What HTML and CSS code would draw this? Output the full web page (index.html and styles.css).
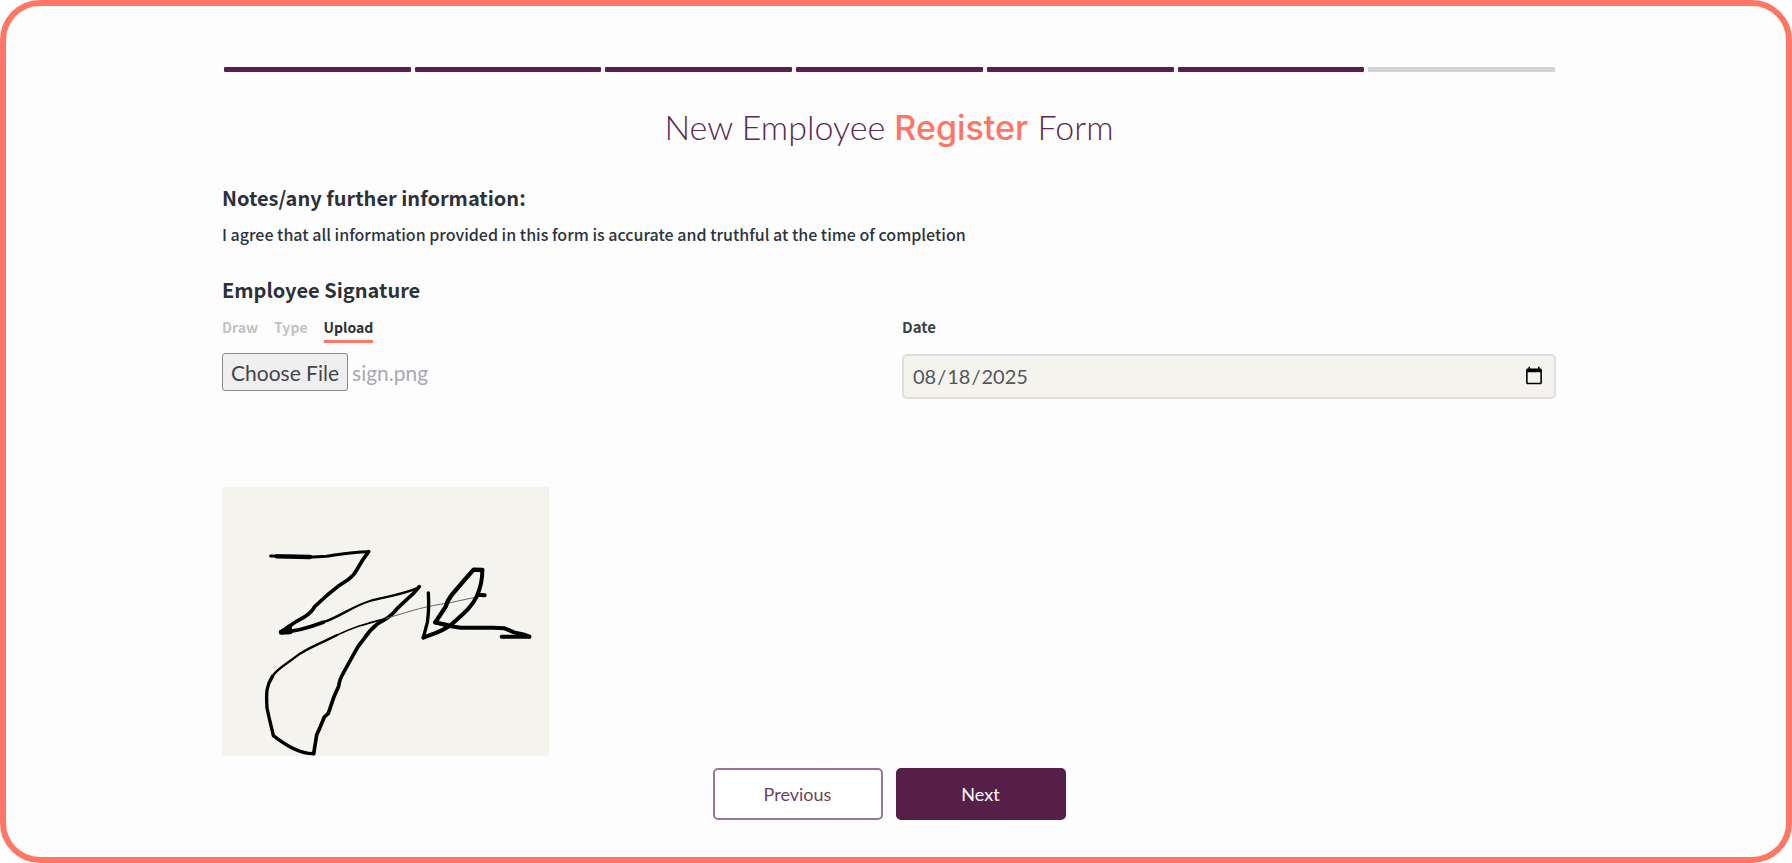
FILE: index.html
```html
<!DOCTYPE html>
<html lang="en">
<head>
    <meta charset="UTF-8">
    <meta name="viewport" content="width=device-width, initial-scale=1.0">
    <title>New Employee Register Form</title>
    <link rel="stylesheet" href="styles.css">
</head>
<body>
    <main class="frame">
        <form class="form" onsubmit="return false">
            <div class="progress">
                <span class="step done"></span>
                <span class="step done"></span>
                <span class="step done"></span>
                <span class="step done"></span>
                <span class="step done"></span>
                <span class="step done"></span>
                <span class="step"></span>
            </div>

            <h1 class="title">New Employee <span class="accent">Register</span> Form</h1>

            <h2 class="heading">Notes/any further information:</h2>
            <p class="statement">I agree that all information provided in this form is accurate and truthful at the time of completion</p>

            <h2 class="heading">Employee Signature</h2>
            <div class="columns">
                <div class="column">
                    <div class="tabs">
                        <button type="button" class="tab">Draw</button>
                        <button type="button" class="tab">Type</button>
                        <button type="button" class="tab active">Upload</button>
                    </div>
                    <input type="file" class="file-input" id="signature" aria-label="Signature file" accept="image/*">
                    <div class="preview">
                        <svg class="signature" viewBox="36 24 981 807" role="img" aria-label="Signature">
                            <g fill="none" stroke="#000" stroke-linecap="round" stroke-linejoin="round">
                                <path stroke-width="9" d="M182 231 L250 232 L310 234 L350 232 C390 226 420 219 476 218"/>
                                <path stroke-width="13" d="M200 232 L300 234"/>
                                <path stroke-width="11" d="M476 218 L458 243 L440 273 Q432 289 414 302 L384 322 L352 348 L314 383 Q306 399 286 412 L260 427 L240 440 L212 459"/>
                                <path stroke-width="15" d="M214 460 L240 458 L238 444"/>
                                <path stroke-width="11" d="M214 460 C250 459 300 445 340 430"/>
                                <path stroke-width="7" d="M338 430 C380 419 430 380 480 366 C530 353 580 346 626 326"/>
                                <path stroke-width="11" d="M628 323 Q610 346 590 362 L562 388 Q545 410 524 422 L502 435 Q478 454 461 481 Q444 500 432 524 L401 580 Q388 602 386 622 L372 653 L355 703 L343 714 L331 743 L320 768 L311 824"/>
                                <path stroke-width="10" d="M311 824 C280 825 246 814 190 770 C185 746 179 726 171 687 C168 640 169 620 188 591"/>
                                <path stroke-width="7" d="M188 591 C199 571 224 559 270 524 C310 499 360 480 380 469"/>
                                <path stroke-width="5" d="M380 469 C430 445 460 436 530 418"/>
                                <path stroke-width="3" stroke="#666" d="M530 418 C610 393 650 381 716 372 L814 351"/>
                                <path stroke-width="10" d="M655 342 Q658 390 652 430 L640 476"/>
                                <path stroke-width="12" d="M640 476 L680 461 Q716 446 736 426 C766 400 789 379 801 350 Q817 315 817 274"/>
                                <path stroke-width="13" d="M817 273 L791 272 L765 301 L724 349 Q712 365 707 383 L676 430"/>
                                <path stroke-width="12" d="M676 430 Q714 442 752 446 L850 446 L884 448 L912 460 L940 466 L958 473"/>
                                <path stroke-width="12" d="M958 473 L875 473 M806 347 L824 349 M676 430 L712 438"/>
                            </g>
                        </svg>
                    </div>
                </div>
                <div class="column">
                    <label class="date-label" for="date">Date</label>
                    <input type="date" class="date-input" id="date" value="2025-08-18">
                </div>
            </div>

            <div class="actions">
                <button type="button" class="btn">Previous</button>
                <button type="submit" class="btn primary">Next</button>
            </div>
        </form>
    </main>

    <script>
        const files = new DataTransfer();
        files.items.add(new File([''], 'sign.png', { type: 'image/png' }));
        document.getElementById('signature').files = files.files;

        const tabs = document.querySelectorAll('.tab');
        tabs.forEach(tab => {
            tab.addEventListener('click', () => {
                tabs.forEach(t => t.classList.remove('active'));
                tab.classList.add('active');
            });
        });
    </script>
</body>
</html>
```

FILE: styles.css
```css
* {
    margin: 0;
    padding: 0;
    box-sizing: border-box;
}

body {
    font-family: "Noto Sans CJK SC", "Noto Sans", sans-serif;
    background: #fff;
    color: #2c3138;
}

.frame {
    min-height: 100vh;
    border: 6px solid #ff7566;
    border-radius: 40px;
    background: #fdfdfd;
    padding: 61px 230px 32px 216px;
}

.progress {
    display: flex;
    gap: 4px;
    padding: 0 1px 0 2px;
}

.step {
    flex: 1;
    height: 5px;
    border-radius: 1px;
    background: #d2d3d6;
}

.step.done {
    background: #5a1f4a;
}

.title {
    margin: 31px 0 37px;
    font-family: Lato, sans-serif;
    font-size: 34px;
    font-weight: 300;
    line-height: 48px;
    text-align: center;
    color: #5a2a50;
}

.accent {
    font-family: Inter, sans-serif;
    font-weight: 500;
    line-height: 40px;
    color: #ff7566;
}

.heading {
    font-size: 20px;
    font-weight: 700;
    line-height: 20px;
}

.statement {
    margin: 16px 0 36px;
    font-size: 16px;
    font-weight: 500;
    line-height: 20px;
    color: #2c343d;
}

.columns {
    display: flex;
    gap: 26px;
    margin-top: 14px;
}

.column {
    flex: 1;
    min-width: 0;
}

.tabs {
    display: flex;
    gap: 16px;
    margin-bottom: 10px;
}

.tab {
    border: none;
    border-bottom: 3px solid transparent;
    background: none;
    font-family: inherit;
    font-size: 14px;
    font-weight: 700;
    line-height: 26px;
    color: #c2c2c4;
    cursor: pointer;
}

.tab.active {
    border-bottom-color: #ff7566;
    color: #2c3138;
}

.file-input {
    display: block;
    width: 100%;
    font-family: Lato, sans-serif;
    font-size: 21px;
    color: #a9a9b0;
}

.file-input::file-selector-button {
    height: 38px;
    padding: 0 8px;
    border: 1px solid #8a8a8a;
    border-radius: 3px;
    background: #efefef;
    font-family: inherit;
    font-size: 21px;
    color: #44444c;
}

.preview {
    width: 50%;
    margin-top: 96px;
    background: #f4f3ee;
}

.signature {
    display: block;
    width: 100%;
    overflow: visible;
}

.date-label {
    display: block;
    font-size: 15px;
    font-weight: 700;
    line-height: 26px;
    color: #3a424b;
}

.date-input {
    width: 100%;
    height: 45px;
    margin-top: 14px;
    padding: 0 8px 2px;
    border: 2px solid #dedede;
    border-radius: 5px;
    background: #f4f3ee;
    font-family: Lato, sans-serif;
    font-size: 20px;
    color: #55565c;
}

.actions {
    display: flex;
    justify-content: center;
    gap: 13px;
    margin-top: 12px;
}

.btn {
    width: 170px;
    height: 52px;
    border: 2px solid #9d7594;
    border-radius: 5px;
    background: #fff;
    font-family: Lato, sans-serif;
    font-size: 18px;
    color: #6e4163;
    cursor: pointer;
}

.btn.primary {
    border-color: #561f47;
    background: #561f47;
    color: #fff;
}
```
